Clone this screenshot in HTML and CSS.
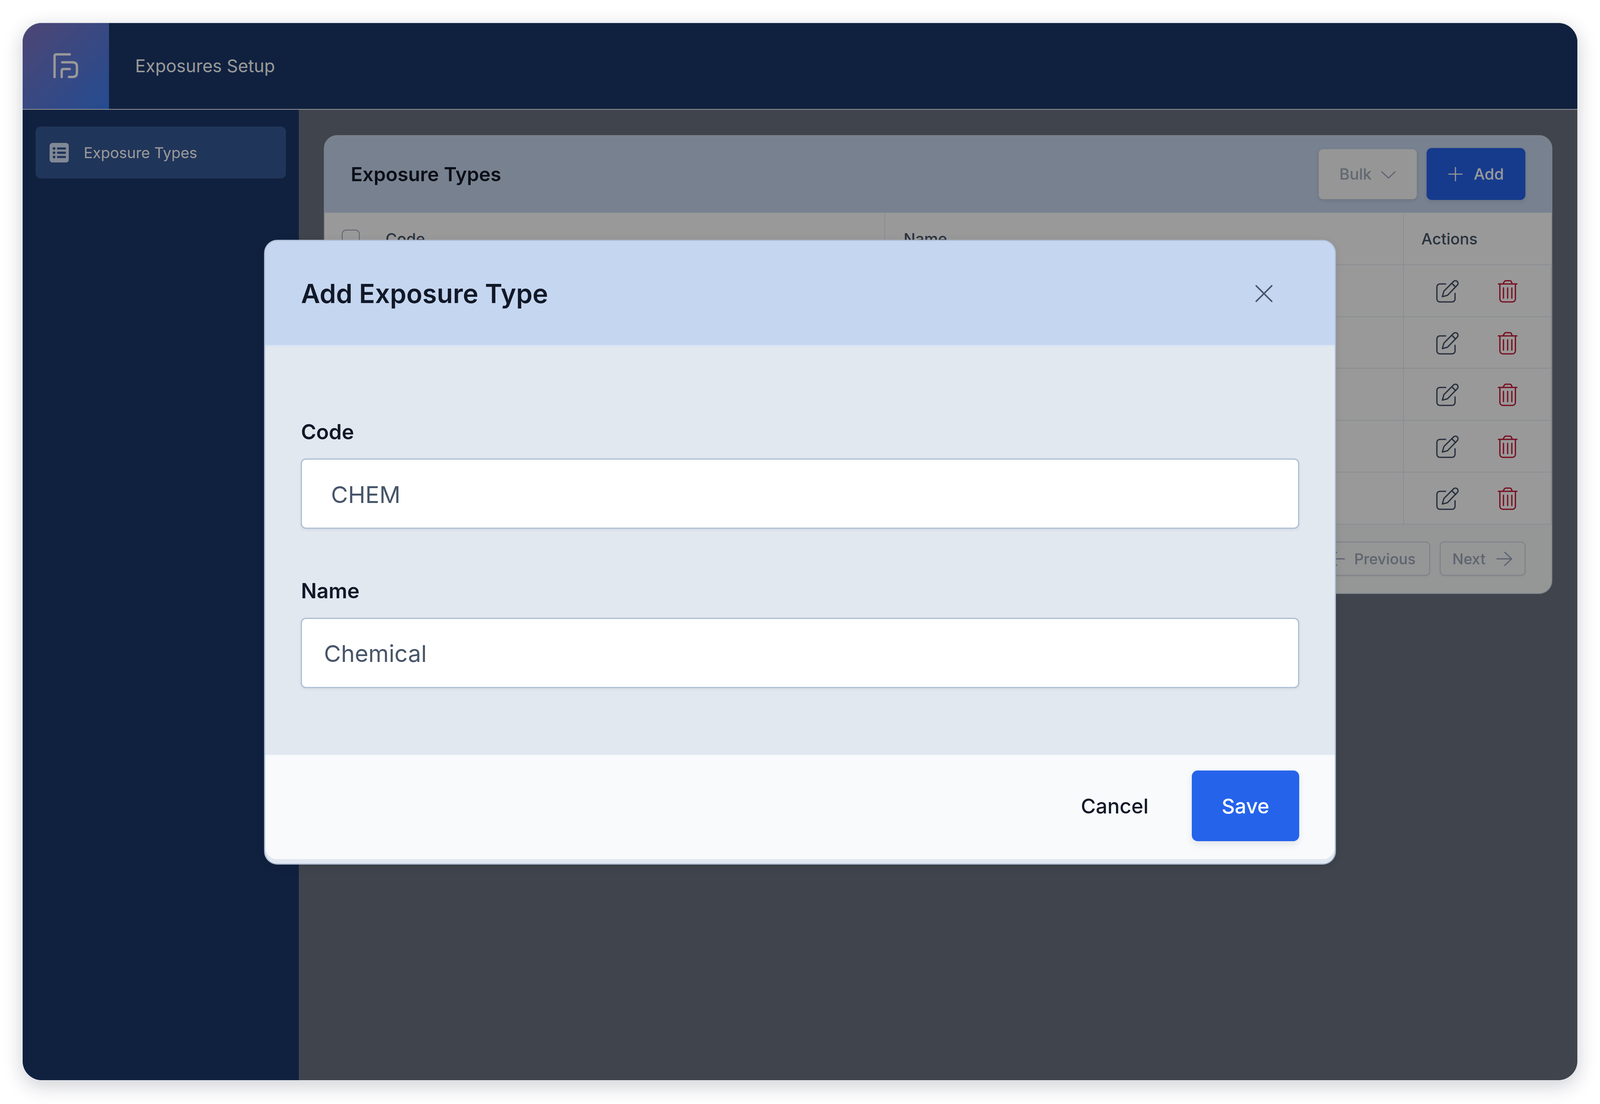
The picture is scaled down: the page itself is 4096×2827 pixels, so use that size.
FILE: index.html
```html
<!DOCTYPE html>
<html lang="en">
<head>
<meta charset="utf-8">
<title>Exposures Setup</title>
<link rel="stylesheet" href="styles.css">
</head>
<body>
<div class="stage">
  <div class="window">
    <header class="topbar">
      <div class="logo">
        <svg class="logo-icon" viewBox="250 245 220 220" fill="none" stroke="#fff" stroke-width="19" stroke-linecap="round" stroke-linejoin="round"><path d="M268 446V276Q268 262 282 262H392"/><path d="M330 326H415Q450 326 450 361V410Q450 445 415 445H385"/><path d="M326 446V396Q326 381 341 381H392"/></svg>
      </div>
      <div class="app-title">Exposures Setup</div>
    </header>
    <div class="content">
      <nav class="sidebar">
        <div class="nav-item">
          <svg class="nav-icon" viewBox="0 0 52 53"><rect width="52" height="53" rx="8" fill="#d7e3f8"/><g fill="#365996"><circle cx="12" cy="15" r="3.6"/><circle cx="12" cy="26.5" r="3.6"/><circle cx="12" cy="38" r="3.6"/><rect x="20" y="12" width="24" height="6" rx="2"/><rect x="20" y="23.5" width="24" height="6" rx="2"/><rect x="20" y="35" width="24" height="6" rx="2"/></g></svg>
          <span>Exposure Types</span>
        </div>
      </nav>
      <main class="main">
        <section class="card">
          <div class="card-head">
            <h2 class="card-title">Exposure Types</h2>
            <div class="card-actions">
              <button class="btn btn-bulk">Bulk
                <svg class="chevron" viewBox="0 0 42 22" fill="none" stroke="#94a3b8" stroke-width="3" stroke-linecap="round" stroke-linejoin="round"><path d="M2 2L21 20L40 2"/></svg>
              </button>
              <button class="btn btn-add">
                <svg class="plus" viewBox="0 0 40 40" fill="none" stroke="#fff" stroke-width="3" stroke-linecap="round"><path d="M20 2V38M2 20H38"/></svg>
                Add</button>
            </div>
          </div>
          <div class="table">
            <div class="row row-head">
              <div class="cell cell-code"><span class="checkbox"></span><span>Code</span></div>
              <div class="cell cell-name">Name</div>
              <div class="cell cell-actions cell-end">Actions</div>
            </div>
            <div class="row">
              <div class="cell cell-code"></div><div class="cell cell-name"></div>
              <div class="cell cell-actions">
                <svg class="icon-edit" viewBox="230 105 190 195" fill="none" stroke="#435269" stroke-width="10.5" stroke-linecap="round" stroke-linejoin="round"><path d="M312 140H265A24 24 0 0 0 241 164V262A24 24 0 0 0 265 286H364A24 24 0 0 0 388 262V216"/><path d="M285 243L298 198L376 120A21 21 0 0 1 406 150L327 232Z"/><path d="M362 135L392 165"/></svg>
                <svg class="icon-trash" viewBox="735 105 160 195" fill="none" stroke="#c81a3a" stroke-width="10.5" stroke-linecap="round" stroke-linejoin="round"><path d="M741 140H891"/><path d="M780 136L790 120Q793 114 800 114H835Q842 114 845 120L852 136"/><path d="M753 140V262A24 24 0 0 0 777 286H855A24 24 0 0 0 879 262V140"/><path d="M782 172V255M816 172V255M850 172V255"/></svg>
              </div>
            </div>
            <div class="row">
              <div class="cell cell-code"></div><div class="cell cell-name"></div>
              <div class="cell cell-actions">
                <svg class="icon-edit" viewBox="230 105 190 195" fill="none" stroke="#435269" stroke-width="10.5" stroke-linecap="round" stroke-linejoin="round"><path d="M312 140H265A24 24 0 0 0 241 164V262A24 24 0 0 0 265 286H364A24 24 0 0 0 388 262V216"/><path d="M285 243L298 198L376 120A21 21 0 0 1 406 150L327 232Z"/><path d="M362 135L392 165"/></svg>
                <svg class="icon-trash" viewBox="735 105 160 195" fill="none" stroke="#c81a3a" stroke-width="10.5" stroke-linecap="round" stroke-linejoin="round"><path d="M741 140H891"/><path d="M780 136L790 120Q793 114 800 114H835Q842 114 845 120L852 136"/><path d="M753 140V262A24 24 0 0 0 777 286H855A24 24 0 0 0 879 262V140"/><path d="M782 172V255M816 172V255M850 172V255"/></svg>
              </div>
            </div>
            <div class="row">
              <div class="cell cell-code"></div><div class="cell cell-name"></div>
              <div class="cell cell-actions">
                <svg class="icon-edit" viewBox="230 105 190 195" fill="none" stroke="#435269" stroke-width="10.5" stroke-linecap="round" stroke-linejoin="round"><path d="M312 140H265A24 24 0 0 0 241 164V262A24 24 0 0 0 265 286H364A24 24 0 0 0 388 262V216"/><path d="M285 243L298 198L376 120A21 21 0 0 1 406 150L327 232Z"/><path d="M362 135L392 165"/></svg>
                <svg class="icon-trash" viewBox="735 105 160 195" fill="none" stroke="#c81a3a" stroke-width="10.5" stroke-linecap="round" stroke-linejoin="round"><path d="M741 140H891"/><path d="M780 136L790 120Q793 114 800 114H835Q842 114 845 120L852 136"/><path d="M753 140V262A24 24 0 0 0 777 286H855A24 24 0 0 0 879 262V140"/><path d="M782 172V255M816 172V255M850 172V255"/></svg>
              </div>
            </div>
            <div class="row">
              <div class="cell cell-code"></div><div class="cell cell-name"></div>
              <div class="cell cell-actions">
                <svg class="icon-edit" viewBox="230 105 190 195" fill="none" stroke="#435269" stroke-width="10.5" stroke-linecap="round" stroke-linejoin="round"><path d="M312 140H265A24 24 0 0 0 241 164V262A24 24 0 0 0 265 286H364A24 24 0 0 0 388 262V216"/><path d="M285 243L298 198L376 120A21 21 0 0 1 406 150L327 232Z"/><path d="M362 135L392 165"/></svg>
                <svg class="icon-trash" viewBox="735 105 160 195" fill="none" stroke="#c81a3a" stroke-width="10.5" stroke-linecap="round" stroke-linejoin="round"><path d="M741 140H891"/><path d="M780 136L790 120Q793 114 800 114H835Q842 114 845 120L852 136"/><path d="M753 140V262A24 24 0 0 0 777 286H855A24 24 0 0 0 879 262V140"/><path d="M782 172V255M816 172V255M850 172V255"/></svg>
              </div>
            </div>
            <div class="row">
              <div class="cell cell-code"></div><div class="cell cell-name"></div>
              <div class="cell cell-actions">
                <svg class="icon-edit" viewBox="230 105 190 195" fill="none" stroke="#435269" stroke-width="10.5" stroke-linecap="round" stroke-linejoin="round"><path d="M312 140H265A24 24 0 0 0 241 164V262A24 24 0 0 0 265 286H364A24 24 0 0 0 388 262V216"/><path d="M285 243L298 198L376 120A21 21 0 0 1 406 150L327 232Z"/><path d="M362 135L392 165"/></svg>
                <svg class="icon-trash" viewBox="735 105 160 195" fill="none" stroke="#c81a3a" stroke-width="10.5" stroke-linecap="round" stroke-linejoin="round"><path d="M741 140H891"/><path d="M780 136L790 120Q793 114 800 114H835Q842 114 845 120L852 136"/><path d="M753 140V262A24 24 0 0 0 777 286H855A24 24 0 0 0 879 262V140"/><path d="M782 172V255M816 172V255M850 172V255"/></svg>
              </div>
            </div>
          </div>
          <div class="card-foot">
            <button class="btn-page btn-prev">
              <svg class="arrow" viewBox="0 0 42 38" fill="none" stroke="#94a3b8" stroke-width="3" stroke-linecap="round" stroke-linejoin="round"><path d="M41 19H1M20 1L1 19L20 37"/></svg>
              Previous</button>
            <button class="btn-page btn-next">Next
              <svg class="arrow" viewBox="0 0 42 38" fill="none" stroke="#94a3b8" stroke-width="3" stroke-linecap="round" stroke-linejoin="round"><path d="M1 19H41M22 1L41 19L22 37"/></svg>
            </button>
          </div>
        </section>
      </main>
    </div>
    <div class="overlay">
      <div class="modal">
        <div class="modal-head">
          <h1 class="modal-title">Add Exposure Type</h1>
          <svg class="close" viewBox="0 0 48 48" fill="none" stroke="#475569" stroke-width="4" stroke-linecap="round"><path d="M3 3L45 45M45 3L3 45"/></svg>
        </div>
        <div class="modal-body">
          <div class="field">
            <label class="field-label">Code</label>
            <div class="input input-code">CHEM</div>
          </div>
          <div class="field">
            <label class="field-label">Name</label>
            <div class="input input-name">Chemical</div>
          </div>
        </div>
        <div class="modal-foot">
          <button class="btn-cancel">Cancel</button>
          <button class="btn-save">Save</button>
        </div>
      </div>
    </div>
  </div>
</div>
</body>
</html>
```
FILE: styles.css
```css
html, body {
  margin: 0;
  padding: 0;
  background: #fff;
  overflow: hidden;
}
.stage {
  zoom: 0.948;
  width: 4320px;
  height: 2982px;
  box-sizing: border-box;
  padding: 60px 58px 62px 59px;
  font-family: Inter, "Liberation Sans", sans-serif;
  color: #111827;
}
button { font-family: inherit; }
.window {
  position: relative;
  height: 100%;
  box-sizing: border-box;
  border: 3px solid #e6e7ec;
  border-radius: 54px;
  background: #6b7280;
  display: flex;
  flex-direction: column;
  overflow: hidden;
  box-shadow: 0 14px 52px rgba(20, 25, 50, 0.2);
}
.topbar {
  flex: none;
  display: flex;
  align-items: center;
  height: 234px;
  box-sizing: border-box;
  background: #1c3769;
  border-bottom: 3px solid #f3f4f6;
}
.logo {
  width: 233px;
  height: 100%;
  display: flex;
  align-items: center;
  justify-content: center;
  background: linear-gradient(135deg, #8275c2 0%, #3d7ef0 100%);
}
.logo-icon { width: 73px; height: 73px; }
.app-title {
  margin-left: 71px;
  font-size: 47.3px;
  font-weight: 400;
  color: #fff;
}
.content { flex: 1; display: flex; min-height: 0; }
.sidebar {
  flex: none;
  width: 746px;
  box-sizing: border-box;
  padding: 46px 35px;
  background: #1c3769;
}
.nav-item {
  display: flex;
  align-items: center;
  gap: 40px;
  height: 140px;
  padding-left: 38px;
  border-radius: 14px;
  background: #365996;
  font-size: 40.5px;
  font-weight: 400;
  color: #fff;
}
.nav-icon { width: 52px; height: 53px; }
.main {
  flex: 1;
  min-width: 0;
  box-sizing: border-box;
  padding: 69px 68px 66px 67px;
}
.card {
  border: 3px solid #cbd5e1;
  border-radius: 36px;
  overflow: hidden;
  background: #f9fafb;
}
.card-head {
  display: flex;
  align-items: center;
  justify-content: space-between;
  height: 208px;
  box-sizing: border-box;
  padding: 0 71px 0 71px;
  background: #c8d7ee;
  border-bottom: 3px solid #d4dfef;
}
.card-title {
  margin: 0;
  font-size: 52.5px;
  font-weight: 600;
  color: #111827;
}
.card-actions { display: flex; align-items: center; gap: 27px; }
.btn {
  display: flex;
  align-items: center;
  justify-content: center;
  border: none;
  font-size: 42px;
  font-weight: 500;
  padding: 0;
}
.btn-bulk {
  width: 265px;
  height: 135px;
  gap: 25px;
  border-radius: 12px;
  background: #fbfbfb;
  color: #a3afbf;
  box-shadow: 0 4px 10px rgba(40, 50, 80, 0.12);
}
.chevron { width: 41px; height: 21px; margin-top: 4px; }
.btn-add {
  width: 266px;
  height: 140px;
  gap: 29px;
  border-radius: 14px;
  background: #2563eb;
  color: #fff;
  box-shadow: 0 4px 10px rgba(40, 50, 80, 0.12);
}
.plus { width: 40px; height: 40px; }
.table { background: #fff; }
.row {
  display: grid;
  grid-template-columns: 1514px 1401px 1fr;
  height: 140px;
  box-sizing: border-box;
  border-bottom: 3px solid #e5ebf3;
}
.row-head { height: 141px; }
.cell {
  display: flex;
  align-items: center;
  box-sizing: border-box;
  border-right: 3px solid #e5ebf3;
  font-size: 42px;
  font-weight: 500;
  color: #475569;
}
.cell-end { border-right: none; }
.cell-code { padding-left: 47px; gap: 70px; }
.cell-name { padding-left: 50px; }
.cell-actions { padding-left: 47px; }
.row:not(.row-head) .cell-actions { padding: 5px 0 0 85px; gap: 105px; }
.checkbox {
  width: 48px;
  height: 48px;
  box-sizing: border-box;
  border: 3px solid #94a3b8;
  border-radius: 12px;
  background: #fff;
}
.icon-edit { width: 63.3px; height: 65px; }
.icon-trash { width: 53.3px; height: 65px; }
.card-foot {
  display: flex;
  justify-content: flex-end;
  gap: 26px;
  padding: 47px 71px 47px 0;
}
.btn-page {
  display: flex;
  align-items: center;
  justify-content: flex-start;
  height: 92px;
  box-sizing: border-box;
  border: 3px solid #cbd5e1;
  border-radius: 12px;
  background: transparent;
  font-size: 40px;
  font-weight: 500;
  color: #9ca8b8;
  padding: 0;
  box-shadow: 0 2px 5px rgba(40, 50, 80, 0.08);
}
.btn-prev { width: 291px; gap: 25px; padding-left: 17px; }
.btn-next { width: 231px; gap: 30px; padding-left: 32px; }
.arrow { width: 42px; height: 38px; }
.overlay {
  position: absolute;
  inset: 0;
  display: flex;
  align-items: center;
  justify-content: center;
  background: rgba(0, 0, 0, 0.4);
}
.modal {
  width: 2894px;
  height: 1688px;
  margin-top: 3px;
  box-sizing: border-box;
  border: 4px solid #aebfd6;
  border-radius: 36px;
  background: #e2e8f0;
  display: flex;
  flex-direction: column;
  overflow: hidden;
  padding-bottom: 12px;
  box-shadow: 0 6px 20px rgba(0, 0, 0, 0.1);
}
.modal-head {
  flex: none;
  display: flex;
  align-items: center;
  justify-content: space-between;
  height: 285px;
  box-sizing: border-box;
  padding: 4px 167px 0 96px;
  background: #c5d6f0;
  border-bottom: 5px solid #d8e3f3;
}
.modal-title {
  margin: 0;
  font-size: 71px;
  font-weight: 600;
  color: #111827;
}
.close { width: 48px; height: 48px; }
.modal-body {
  flex: 1;
  box-sizing: border-box;
  padding: 195px 96px 0;
  display: flex;
  flex-direction: column;
  gap: 132px;
}
.field { display: flex; flex-direction: column; gap: 36px; }
.field-label {
  line-height: 72px;
  font-size: 56px;
  font-weight: 600;
  color: #111827;
}
.input {
  display: flex;
  align-items: center;
  height: 190px;
  box-sizing: border-box;
  border: 4px solid #aebfd6;
  border-radius: 14px;
  padding-top: 3px;
  background: #fff;
  font-size: 63px;
  color: #475569;
  box-shadow: 0 3px 8px rgba(40, 50, 80, 0.08);
}
.input-code { padding-left: 78px; }
.input-name { padding-left: 59px; }
.modal-foot {
  flex: none;
  display: flex;
  align-items: center;
  justify-content: flex-end;
  height: 281px;
  box-sizing: border-box;
  padding: 0 96px 6px;
  gap: 117px;
  background: #f8fafc;
  border-radius: 0 0 32px 32px;
}
.btn-cancel {
  border: none;
  background: transparent;
  padding: 0;
  font-size: 55px;
  font-weight: 500;
  color: #111827;
}
.btn-save {
  width: 290px;
  height: 191px;
  border: none;
  border-radius: 16px;
  background: #2563eb;
  font-size: 55px;
  font-weight: 500;
  color: #fff;
  box-shadow: 0 8px 18px rgba(40, 50, 80, 0.1);
}
```
